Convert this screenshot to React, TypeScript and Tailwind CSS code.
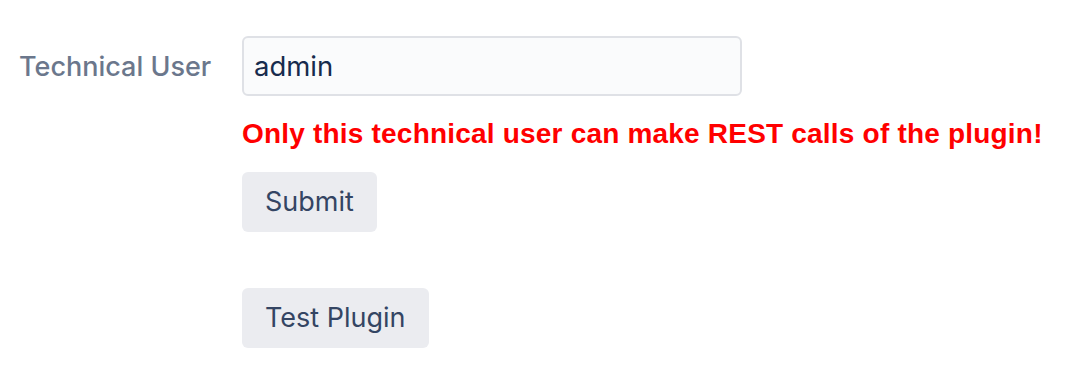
export default function App() {
  return (
    <div className="w-[1090px] h-[372px] bg-white pt-[36px] flex" style={{ fontFamily: "Inter, 'Noto Sans', sans-serif" }}>
      <div className="w-[242px] pl-[19px] h-[60px] flex items-center">
        <span className="text-[27px] font-medium text-[#6b778c] leading-none pt-[1px]">Technical User</span>
      </div>
      <div className="flex flex-col items-start">
        <input
          defaultValue="admin"
          className="w-[500px] h-[60px] border-2 border-[#dfe1e6] bg-[#fafbfc] rounded-[6px] px-[10px] text-[27.5px] text-[#172b4d] outline-none"
          style={{ fontFamily: "Inter, 'Noto Sans', sans-serif" }}
        />
        <div className="mt-[21px] text-[28px] leading-[34px] font-bold text-[#ff0000] tracking-[0.2px]" style={{ fontFamily: "'Liberation Sans', Arial, sans-serif" }}>
          Only this technical user can make REST calls of the plugin!
        </div>
        <button className="mt-[21px] h-[60px] px-[23px] bg-[#ebecf0] rounded-[6px] text-[27px] text-[#344563]">Submit</button>
        <button className="mt-[56px] h-[60px] px-[23px] bg-[#ebecf0] rounded-[6px] text-[27px] text-[#344563]">Test Plugin</button>
      </div>
    </div>
  );
}
